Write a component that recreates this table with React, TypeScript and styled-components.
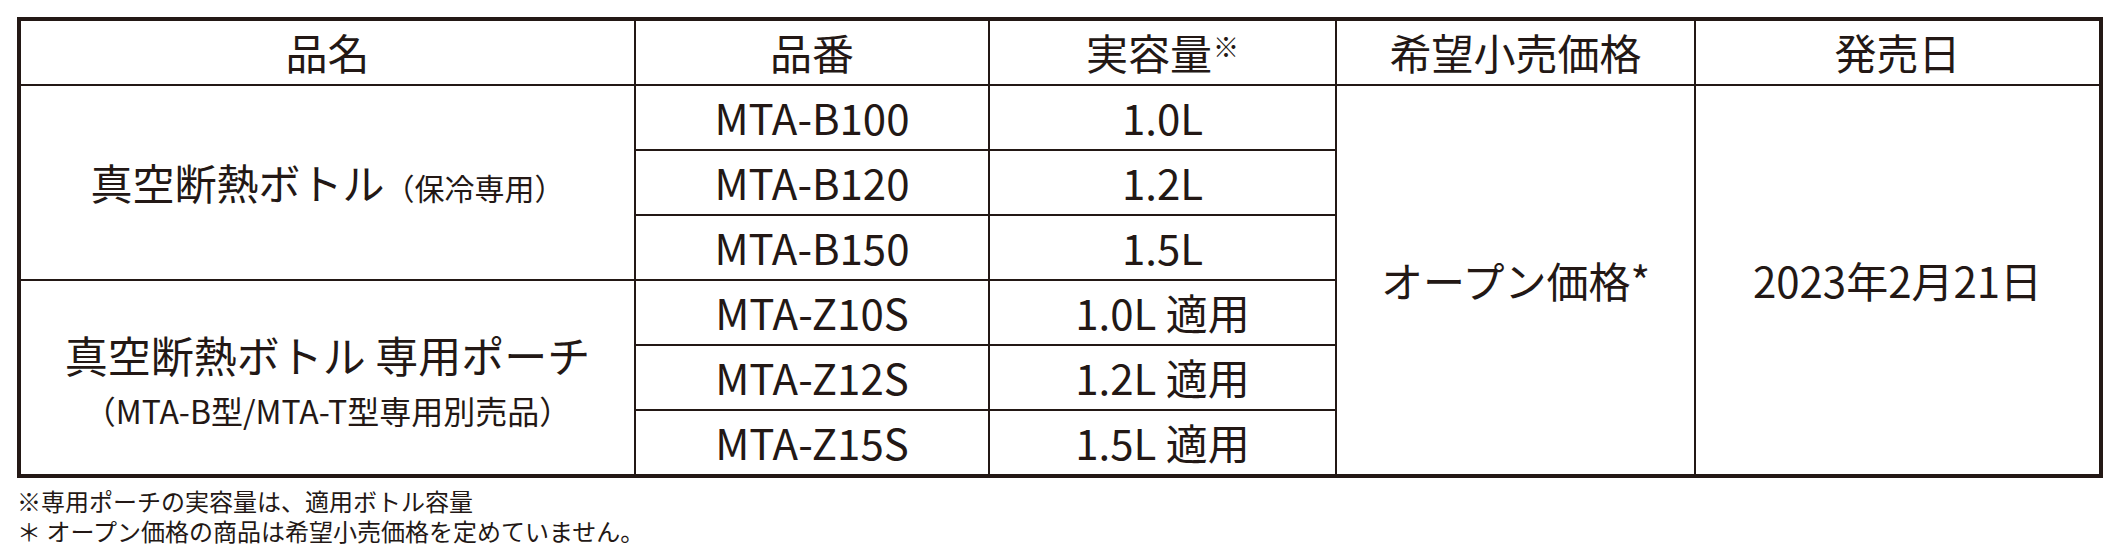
import React from "react";
import styled, { createGlobalStyle } from "styled-components";

const INK = "#231815";

const GlobalStyle = createGlobalStyle`
  html, body { margin: 0; padding: 0; background: #ffffff; }
  body {
    font-family: "Noto Sans CJK JP", "Noto Sans", sans-serif;
    color: ${INK};
  }
`;

const Page = styled.main`
  box-sizing: border-box;
  width: 2118px;
  height: 553px;
  padding: 17px 0 0 17px;
`;

const Table = styled.div`
  box-sizing: border-box;
  display: grid;
  grid-template-columns: 613px 352px 345px 357px 403px;
  grid-template-rows: 63px repeat(6, 63px);
  gap: 2px;
  width: 2086px;
  border: 4px solid ${INK};
  background: ${INK};
`;

const Cell = styled.div<{ $col: number; $row: number; $span?: number }>`
  grid-column: ${(p) => p.$col};
  grid-row: ${(p) => p.$row} / span ${(p) => p.$span ?? 1};
  background: #ffffff;
  display: flex;
  flex-direction: column;
  align-items: center;
  justify-content: center;
  font-size: 42px;
  line-height: 1.2;
  white-space: nowrap;
`;

const Mark = styled.span`
  font-size: 26px;
  position: relative;
  top: -13px;
  margin-left: 1px;
`;

const Paren = styled.span`
  font-size: 30px;
`;

const NameMain = styled.div`
  font-size: 43px;
  line-height: 64px;
`;

const NameSub = styled.div`
  font-size: 32px;
  line-height: 48px;
`;

const Notes = styled.div`
  margin-top: 8px;
  font-size: 24px;
  line-height: 30px;
`;

const NoteLine = styled.div`
  white-space: nowrap;
`;

const headers = ["品名", "品番", "実容量", "希望小売価格", "発売日"];

const rows: { code: string; vol: string }[] = [
  { code: "MTA-B100", vol: "1.0L" },
  { code: "MTA-B120", vol: "1.2L" },
  { code: "MTA-B150", vol: "1.5L" },
  { code: "MTA-Z10S", vol: "1.0L 適用" },
  { code: "MTA-Z12S", vol: "1.2L 適用" },
  { code: "MTA-Z15S", vol: "1.5L 適用" },
];

export default function App() {
  return (
    <Page>
      <GlobalStyle />
      <Table>
        {headers.map((h, i) => (
          <Cell key={h} $col={i + 1} $row={1}>
            <div>
              {h}
              {h === "実容量" && <Mark>※</Mark>}
            </div>
          </Cell>
        ))}

        <Cell $col={1} $row={2} $span={3}>
          <div>
            真空断熱ボトル<Paren>（保冷専用）</Paren>
          </div>
        </Cell>
        <Cell $col={1} $row={5} $span={3}>
          <NameMain>真空断熱ボトル 専用ポーチ</NameMain>
          <NameSub>（MTA-B型/MTA-T型専用別売品）</NameSub>
        </Cell>

        {rows.map((r, i) => (
          <React.Fragment key={r.code}>
            <Cell $col={2} $row={i + 2}>{r.code}</Cell>
            <Cell $col={3} $row={i + 2}>{r.vol}</Cell>
          </React.Fragment>
        ))}

        <Cell $col={4} $row={2} $span={6}>オープン価格*</Cell>
        <Cell $col={5} $row={2} $span={6}>2023年2月21日</Cell>
      </Table>
      <Notes>
        <NoteLine>※専用ポーチの実容量は、適用ボトル容量</NoteLine>
        <NoteLine>＊ オープン価格の商品は希望小売価格を定めていません。</NoteLine>
      </Notes>
    </Page>
  );
}
